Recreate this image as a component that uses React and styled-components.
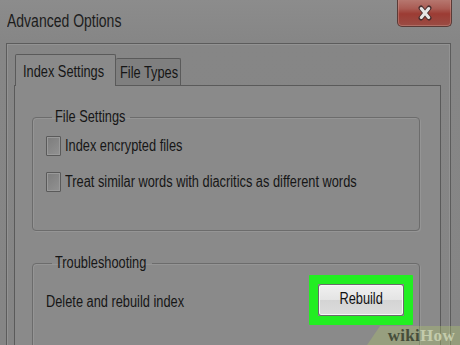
import React from "react";
import styled, { createGlobalStyle } from "styled-components";

const GlobalStyle = createGlobalStyle`
  html, body {
    margin: 0;
    padding: 0;
    background: #858585;
  }
  body {
    font-family: "Liberation Sans", Arial, sans-serif;
    color: #161616;
  }
`;

// the source shot is squeezed sideways, so its text reads as a narrow face
const Text = styled.span`
  display: inline-block;
  white-space: nowrap;
  transform: scaleX(0.8);
  transform-origin: ${(p) => (p.center ? "center" : "left")} center;
`;

const Window = styled.div`
  position: relative;
  width: 460px;
  height: 345px;
  overflow: hidden;
  background: linear-gradient(#8c8c8c, #868686 40px, #858585);
`;

const TitleBar = styled.div`
  display: flex;
  justify-content: space-between;
  align-items: flex-start;
  height: 43px;
  padding: 0 8px 0 7px;
`;

const Title = styled.div`
  font-size: 17.5px;
  line-height: 18px;
  padding-top: 12px;
  color: #1c1c1c;
`;

const CloseButton = styled.div`
  display: flex;
  align-items: center;
  justify-content: center;
  width: 53px;
  height: 27px;
  margin-top: -1px;
  border: 1px solid #5a3a36;
  border-top: none;
  border-radius: 0 0 5px 5px;
  background: linear-gradient(#b87a72 0%, #aa5c54 35%, #9c3c34 55%, #9a4c44 100%);
  box-shadow: inset 0 0 0 1px rgba(210, 160, 150, 0.4);
`;

const Frame = styled.div`
  margin: 0 9px 0 6px;
  border: 1px solid #5c5c5c;
  border-bottom: none;
  height: 302px;
  padding: 10px 9px 0 7px;
  box-shadow: inset 0 0 0 1px #939393;
`;

const TabRow = styled.div`
  display: flex;
  align-items: flex-end;
  padding-left: 1px;
`;

const Tab = styled.div`
  font-size: 16px;
  line-height: 18px;
  width: ${(p) => p.w}px;
  border: 1px solid #5a5a5a;
  border-bottom: none;
  border-radius: 2px 2px 0 0;
  background: ${(p) => (p.active ? "#8a8a8a" : "#7f7f7f")};
  height: ${(p) => (p.active ? "32px" : "27px")};
  padding: ${(p) => (p.active ? "8px 0 0 7px" : "5px 0 0 4px")};
  box-sizing: border-box;
  margin-bottom: ${(p) => (p.active ? "-1px" : "0")};
  position: relative;
  z-index: ${(p) => (p.active ? 1 : 0)};
  ${(p) => (p.active ? "" : "border-left: none;")}
`;

const Panel = styled.div`
  border: 1px solid #5a5a5a;
  border-bottom: none;
  background: #8a8a8a;
  height: 280px;
  padding: 22px 20px 0 17px;
`;

const Group = styled.fieldset`
  margin: 0 0 ${(p) => p.gap || 0}px 0;
  padding: 2px 6px ${(p) => p.bottom || 0}px 13px;
  border: 1px solid #6c6c6c;
  border-radius: 4px;
  box-shadow: 1px 1px 0 #959595, inset 1px 1px 0 #959595;
  min-width: 0;
`;

const Legend = styled.legend`
  display: block;
  box-sizing: content-box;
  margin-left: 6px;
  padding: 0 3px;
  font-size: 16px;
  line-height: 18px;
  height: 18px;
  width: ${(p) => p.w}px;
  max-width: ${(p) => p.w}px;
  overflow: hidden;
`;

const CheckRow = styled.label`
  display: flex;
  align-items: center;
  height: 36px;
  gap: 4px;
  font-size: 16px;
`;

const Box = styled.span`
  width: 13px;
  height: 18px;
  border: 1px solid #5a5a5a;
  border-radius: 1px;
  background: linear-gradient(135deg, #7c7c7c, #929292);
  box-shadow: inset 0 0 0 1px #9a9a9a;
  flex: none;
`;

const ActionRow = styled.div`
  display: flex;
  align-items: center;
  justify-content: space-between;
  height: 52px;
  font-size: 16px;
  padding-top: 2px;
`;

const Highlight = styled.div`
  border: 9px solid #22ee22;
  border-radius: 1px;
  margin-top: -4px;
`;

const Button = styled.button`
  display: flex;
  align-items: center;
  justify-content: center;
  width: 86px;
  height: 32px;
  font-family: inherit;
  font-size: 16px;
  color: #111;
  border: 1px solid #6a6a6a;
  border-radius: 3px;
  background: linear-gradient(#f0f0f0, #e4e4e4 50%, #d4d4d4 51%, #dcdcdc);
  box-shadow: inset 0 0 0 1px #f6f6f6;
  padding: 0 0 2px 0;
`;

const Watermark = styled.div`
  position: absolute;
  right: 0;
  bottom: 0;
  width: 88px;
  height: 19px;
  background: rgba(170, 190, 110, 0.4);
  clip-path: polygon(13px 0, 100% 0, 100% 100%, 0 100%);
  display: flex;
  align-items: center;
  justify-content: flex-end;
  padding-right: 5px;
  font-family: "Liberation Serif", "DejaVu Serif", serif;
  font-weight: bold;
  font-size: 17px;
  letter-spacing: 0.3px;
`;

const Wiki = styled.span`
  color: #464d3a;
`;

const How = styled.span`
  color: #c3cbab;
`;

const CloseIcon = () => (
  <svg width="16" height="16" viewBox="0 0 16 16">
    <path d="M4 3 L12 13 M12 3 L4 13" stroke="#4a3030" strokeWidth="5" strokeLinecap="round" />
    <path d="M4.3 3.5 L11.7 12.5 M11.7 3.5 L4.3 12.5" stroke="#e6e6e6" strokeWidth="3" strokeLinecap="round" />
  </svg>
);

const App = () => (
  <Window>
    <GlobalStyle />
    <TitleBar>
      <Title>
        <Text>Advanced Options</Text>
      </Title>
      <CloseButton>
        <CloseIcon />
      </CloseButton>
    </TitleBar>
    <Frame>
      <TabRow>
        <Tab active w={101}>
          <Text>Index Settings</Text>
        </Tab>
        <Tab w={65}>
          <Text>File Types</Text>
        </Tab>
      </TabRow>
      <Panel>
        <Group gap={23} bottom={30}>
          <Legend w={72}>
            <Text>File Settings</Text>
          </Legend>
          <CheckRow>
            <Box />
            <Text>Index encrypted files</Text>
          </CheckRow>
          <CheckRow>
            <Box />
            <Text>Treat similar words with diacritics as different words</Text>
          </CheckRow>
        </Group>
        <Group bottom={20}>
          <Legend w={94}>
            <Text>Troubleshooting</Text>
          </Legend>
          <ActionRow>
            <Text>Delete and rebuild index</Text>
            <Highlight>
              <Button>
                <Text center>Rebuild</Text>
              </Button>
            </Highlight>
          </ActionRow>
        </Group>
      </Panel>
    </Frame>
    <Watermark>
      <Wiki>wiki</Wiki>
      <How>How</How>
    </Watermark>
  </Window>
);

export default App;
